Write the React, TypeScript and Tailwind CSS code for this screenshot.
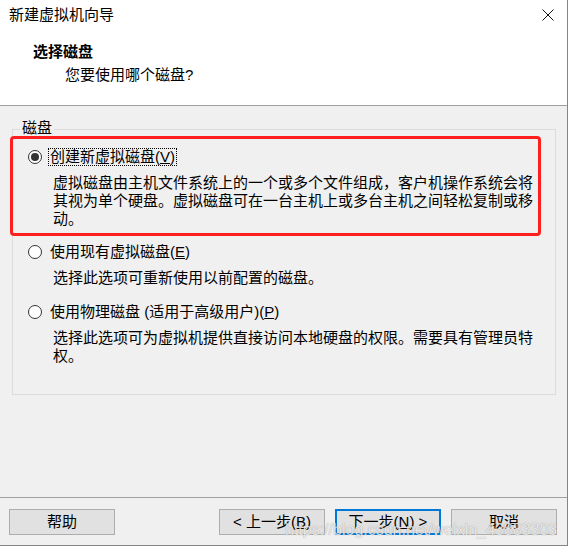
import type { ReactNode } from "react";

const font = "font-['Liberation_Sans','Noto_Sans_CJK_SC',sans-serif]";

const Radio = ({ checked }: { checked?: boolean }) => (
  <span className="w-[14px] h-[14px] rounded-full border border-[#333] bg-white flex items-center justify-center shrink-0">
    {checked && <span className="w-[8px] h-[8px] rounded-full bg-[#333]" />}
  </span>
);

type OptionProps = {
  label: ReactNode;
  desc: string;
  checked?: boolean;
  focused?: boolean;
};

const DiskOption = ({ label, desc, checked, focused }: OptionProps) => (
  <div className="flex flex-col pl-[15px]">
    <div className="flex items-center h-[20px] gap-[6px]">
      <Radio checked={checked} />
      <span
        className={`px-[1px] h-[18px] leading-[16px] border border-dotted ${
          focused ? "border-black" : "border-transparent"
        }`}
      >
        {label}
      </span>
    </div>
    <p className="mt-[7px] ml-[25px] w-[482px] leading-[18px]">{desc}</p>
  </div>
);

const CloseIcon = () => (
  <svg width="12" height="12" viewBox="0 0 12 12" className="shrink-0">
    <path d="M0.5 0.5 L11.5 11.5 M11.5 0.5 L0.5 11.5" stroke="#111" strokeWidth="1" />
  </svg>
);

const WizardButton = ({ children, primary }: { children: ReactNode; primary?: boolean }) => (
  <button
    className={`w-[106px] h-[26px] bg-[#e1e1e1] flex items-center justify-center text-[15px] text-black ${
      primary ? "border-2 border-[#0078d7]" : "border border-[#adadad]"
    }`}
  >
    {children}
  </button>
);

export default function App() {
  return (
    <div className={`relative w-[569px] h-[549px] bg-white text-[15px] text-black ${font}`}>
      <div className="w-[568px] h-[546px] flex flex-col bg-[#f0f0f0] border-r border-b border-[#858585]">
        {/* header */}
        <div className="h-[106px] bg-white border-b border-[#a0a0a0] flex flex-col shrink-0">
          <div className="h-[30px] flex items-center justify-between pl-[9px] pr-[13px]">
            <span className="leading-[18px]">新建虚拟机向导</span>
            <CloseIcon />
          </div>
          <div className="mt-[13px] pl-[33px] font-bold leading-[18px]">选择磁盘</div>
          <div className="mt-[5px] pl-[65px] leading-[18px]">您要使用哪个磁盘?</div>
        </div>

        {/* body */}
        <div className="flex-1">
          <div className="mt-[23px] ml-[12px] w-[544px] h-[266px] border border-[#dcdcdc] flex flex-col">
            <span className="-mt-[11px] ml-[7px] px-[2px] w-fit h-[18px] leading-[18px] bg-[#f0f0f0]">
              磁盘
            </span>

            <div className="-mt-[1px] -ml-[3px] w-[531px] border-[3px] border-[#ff1f1f] rounded-[4px] pt-[8px] pb-[5px]">
              <DiskOption
                checked
                focused
                label={
                  <>
                    创建新虚拟磁盘(<u>V</u>)
                  </>
                }
                desc="虚拟磁盘由主机文件系统上的一个或多个文件组成，客户机操作系统会将其视为单个硬盘。虚拟磁盘可在一台主机上或多台主机之间轻松复制或移动。"
              />
            </div>

            <div className="mt-[6px]">
              <DiskOption
                label={
                  <>
                    使用现有虚拟磁盘(<u>E</u>)
                  </>
                }
                desc="选择此选项可重新使用以前配置的磁盘。"
              />
            </div>

            <div className="mt-[15px]">
              <DiskOption
                label={
                  <>
                    使用物理磁盘 (适用于高级用户)(<u>P</u>)
                  </>
                }
                desc="选择此选项可为虚拟机提供直接访问本地硬盘的权限。需要具有管理员特权。"
              />
            </div>
          </div>
        </div>

        {/* footer */}
        <div className="h-[48px] shrink-0 border-t border-[#a0a0a0] flex items-start justify-between pt-[11px] pl-[9px] pr-[10px]">
          <WizardButton>帮助</WizardButton>
          <div className="flex gap-[10px]">
            <WizardButton>
              &lt; 上一步(<u>B</u>)
            </WizardButton>
            <WizardButton primary>
              下一步(<u>N</u>) &gt;
            </WizardButton>
            <WizardButton>取消</WizardButton>
          </div>
        </div>
      </div>

      {/* watermark */}
      <span className="absolute left-[285px] top-[520px] text-[16px] leading-[20px] font-['Liberation_Sans',sans-serif] text-white/80 [text-shadow:0_0_1px_rgba(0,0,0,0.45)] pointer-events-none">
        https://blog.csdn.net/weixin_43883303
      </span>
    </div>
  );
}
